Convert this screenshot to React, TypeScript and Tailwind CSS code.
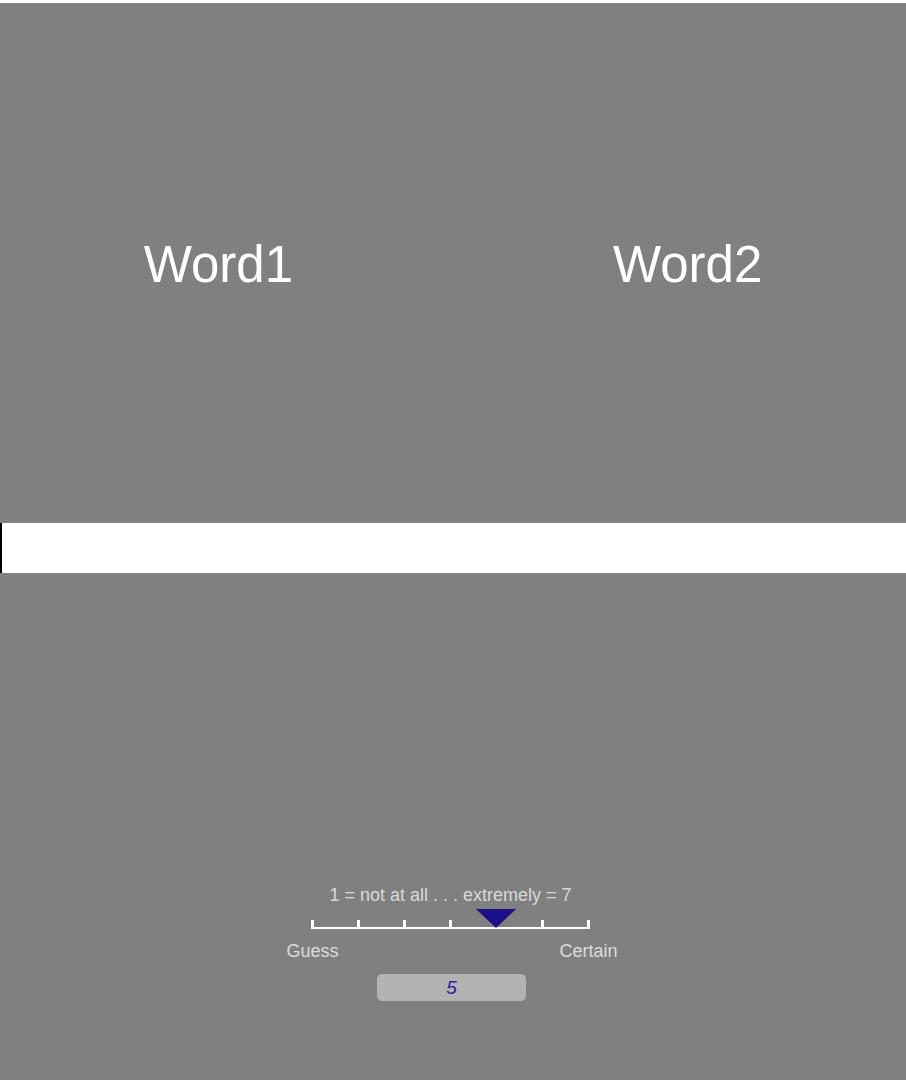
export default function App() {
  const ticks = [0, 1, 2, 3, 4, 5, 6];

  return (
    <div className="w-[906px] h-[1080px] bg-white pt-[3px] font-['Liberation_Sans',Arial,sans-serif]">
      {/* Stimulus panel */}
      <div className="h-[520px] bg-[#808080] flex items-center justify-center gap-[320px] pt-[3px]">
        <span className="text-[51px] leading-none text-white">Word1</span>
        <span className="text-[51px] leading-none text-white">Word2</span>
      </div>

      {/* Response strip */}
      <div className="h-[50px] bg-white border-l-2 border-black" />

      {/* Rating panel */}
      <div className="h-[507px] bg-[#808080] flex flex-col items-center pt-[312px] pr-[5px]">
        <div className="text-[18px] leading-[21px] text-[#d9d9d9] whitespace-nowrap">
          1 = not at all . . . extremely = 7
        </div>

        <div className="relative mt-[3px] w-[279px] h-[20px] flex flex-col justify-end">
          <div className="flex justify-between items-end h-[7px]">
            {ticks.map((t) => (
              <div key={t} className="w-[3px] h-full bg-white" />
            ))}
          </div>
          <div className="h-[2px] bg-white" />

          {/* Marker */}
          <svg className="absolute left-[165px] top-0" width="40" height="19" viewBox="0 0 40 19">
            <polygon points="0,0 40,0 20,19" fill="#1c1089" />
          </svg>
        </div>

        <div className="mt-[12px] w-[279px] flex justify-between text-[18px] leading-[21px] text-[#dcdcdc]">
          <div className="w-[3px] flex justify-center whitespace-nowrap">Guess</div>
          <div className="w-[3px] flex justify-center whitespace-nowrap">Certain</div>
        </div>

        <div className="mt-[12px] ml-[2px] w-[149px] h-[27px] rounded-[5px] bg-[#b3b3b3] flex items-center justify-center italic text-[19px] leading-none text-[#3020a0]">
          5
        </div>
      </div>
    </div>
  );
}
